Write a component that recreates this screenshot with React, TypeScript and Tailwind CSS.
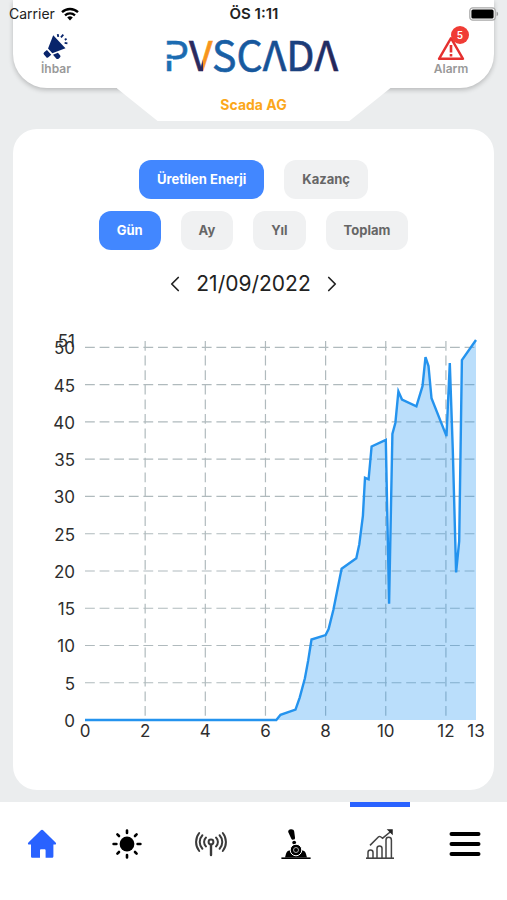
import { useState } from "react";
import type { ReactNode } from "react";
import { ChevronLeft, ChevronRight } from "lucide-react";

type Point = [hour: number, value: number];

const production: Point[] = [
  [0, 0], [6.36, 0], [6.5, 0.7], [7, 1.4], [7.14, 3], [7.31, 5.6], [7.42, 8], [7.53, 10.8],
  [8, 11.4], [8.1, 12.2], [8.26, 14.8], [8.53, 20.3], [9.02, 21.7], [9.12, 23.6], [9.24, 27.4],
  [9.31, 32.5], [9.43, 32.3], [9.53, 36.7], [10, 37.6], [10.11, 15.6], [10.22, 38.4],
  [10.32, 39.9], [10.42, 44.1], [10.54, 43], [11.02, 42.1], [11.22, 44.8], [11.32, 48.7],
  [11.42, 47.5], [11.52, 43.2], [12.02, 38.1], [12.13, 47.9], [12.23, 36.2], [12.34, 19.8],
  [12.44, 24], [12.53, 48.3], [13, 51],
];

const PLOT = { left: 72, right: 463, top: 20, bottom: 400 };
const MAX_HOUR = 13;
const MAX_VALUE = 51;

const px = (hour: number) => PLOT.left + (hour / MAX_HOUR) * (PLOT.right - PLOT.left);
const py = (value: number) => PLOT.bottom - (value / MAX_VALUE) * (PLOT.bottom - PLOT.top);

const yTicks = [0, 5, 10, 15, 20, 25, 30, 35, 40, 45, 50, 51];
const xTicks = [0, 2, 4, 6, 8, 10, 12, 13];

function EnergyChart() {
  const line = production.map(([h, v]) => `${px(h).toFixed(1)},${py(v).toFixed(1)}`).join(" ");

  return (
    <svg viewBox="0 0 481 430" className="block w-full" role="img" aria-label="Üretilen Enerji">
      <g stroke="#b0babd" strokeWidth="1.2" strokeDasharray="9.8 4.8">
        {yTicks.slice(1, -1).map((v) => (
          <line key={v} x1={PLOT.left} x2={PLOT.right} y1={py(v)} y2={py(v)} />
        ))}
        {xTicks.slice(1, -1).map((h) => (
          <line key={h} x1={px(h)} x2={px(h)} y1={PLOT.top + 1} y2={PLOT.bottom} />
        ))}
      </g>
      <polygon
        points={`${PLOT.left},${PLOT.bottom} ${line} ${PLOT.right},${PLOT.bottom}`}
        fill="#2196f3"
        fillOpacity="0.31"
      />
      <polyline points={line} fill="none" stroke="#2493ee" strokeWidth="2.4" />
      <g className="fill-[#2e2e2e] text-[17px]">
        {yTicks.map((v) => (
          <text key={v} x={PLOT.left - 10} y={py(v) + 7} textAnchor="end">
            {v}
          </text>
        ))}
        {xTicks.map((h) => (
          <text key={h} x={px(h)} y={PLOT.bottom + 17} textAnchor="middle">
            {h}
          </text>
        ))}
      </g>
    </svg>
  );
}

function Chip({ label, active, onClick }: { label: string; active: boolean; onClick: () => void }) {
  return (
    <button
      type="button"
      onClick={onClick}
      className={`h-[39px] rounded-xl px-[18px] text-[13px] font-bold ${
        active ? "bg-[#4287ff] text-white" : "bg-[#f0f1f2] text-[#666666]"
      }`}
    >
      {label}
    </button>
  );
}

function StatusBar() {
  return (
    <div className="absolute inset-x-0 top-0 z-20 grid h-7 grid-cols-3 items-center pr-2 pl-[9px] text-sm text-[#222222]">
      <div className="flex items-center gap-1.5">
        <span>Carrier</span>
        <svg width="18" height="14" viewBox="0 0 18 14" fill="none" stroke="#000" strokeWidth="2.3">
          <path d="M1 5.2a11.6 11.6 0 0 1 16 0M4 8.4a7.4 7.4 0 0 1 10 0" />
          <path d="M9 13.4 6.2 10.6a4 4 0 0 1 5.6 0z" fill="#000" stroke="none" />
        </svg>
      </div>
      <span className="text-center text-[15px] font-semibold">ÖS 1:11</span>
      <svg width="30" height="14" viewBox="0 0 30 14" className="justify-self-end">
        <rect x="0.8" y="0.8" width="25.4" height="12.4" rx="3" fill="#fff" stroke="#a8a8a8" strokeWidth="1.2" />
        <rect x="2.4" y="2.4" width="22.2" height="9.2" rx="1.6" fill="#000" />
        <path d="M27.6 4.8c2 .6 2 3.8 0 4.4z" fill="#999" />
      </svg>
    </div>
  );
}

function Logo() {
  return (
    <svg width="180" height="46" viewBox="0 0 180 46" className="overflow-visible" role="img" aria-label="PVSCADA">
      <defs>
        <linearGradient id="word" gradientUnits="userSpaceOnUse" x1="0" x2="176" y1="0" y2="0">
          <stop offset="0" stopColor="#1d6fb5" />
          <stop offset="0.6" stopColor="#155398" />
          <stop offset="1" stopColor="#242254" />
        </linearGradient>
        <linearGradient id="vee" gradientUnits="userSpaceOnUse" x1="0" x2="80" y1="0" y2="0">
          <stop offset="0.49" stopColor="#2a2a5e" />
          <stop offset="0.49" stopColor="#f7941d" />
        </linearGradient>
      </defs>
      <text
        x="-1"
        y="40"
        fill="url(#word)"
        stroke="url(#word)"
        strokeWidth="0.6"
        className="font-['Noto_Sans_CJK_SC',sans-serif] text-[41px]"
      >
        P<tspan fill="url(#vee)" stroke="url(#vee)">V</tspan>SCΛDΛ
      </text>
      {/* breaks in the stem of the P */}
      <path d="M0 13.8h9v9.6H0zM0 27.8h9v2H0z" fill="#fff" />
    </svg>
  );
}

function HornIcon() {
  return (
    <svg width="28" height="28" viewBox="0 0 26 26" fill="#08246b">
      <path d="M10.4 2.2 21.8 14.2 9.6 18.8 5.6 14.4z" />
      <path d="m4.6 15.8 4 4.4-2.4 2.2a1.6 1.6 0 0 1-2.4-.2l-2-2.2a1.6 1.6 0 0 1 .2-2.2z" />
      <path d="m10.2 20.2 4.6-1.8 2 2.2c.6.8.4 1.6-.2 2.2l-1.2 1c-.8.6-1.6.4-2.2-.2z" />
      <path d="m14.6 1 .5 2.6M19.8 1.6 17.6 4M23.6 9.6l-2.6-.4M22.8 5.4l-1.6 1" stroke="#08246b" strokeWidth="1.7" />
    </svg>
  );
}

function WarningIcon() {
  return (
    <svg width="28" height="25" viewBox="0 0 28 25" fill="none" stroke="#e5302f" strokeLinejoin="round">
      <path d="M14 2.2 26 22.8H2z" strokeWidth="2.4" />
      <path d="M14 9v7.4M14 18v2.6" strokeWidth="2.6" />
    </svg>
  );
}

function Header() {
  return (
    <header className="flex flex-col items-center">
      <div className="mx-[13px] flex h-[88px] items-end justify-between self-stretch rounded-b-[34px] bg-white pb-[11px] shadow-[0_2px_5px_rgba(0,0,0,0.22)]">
        <button type="button" className="flex w-[86px] flex-col items-center text-xs leading-4 font-semibold text-[#999999]">
          <HornIcon />
          İhbar
        </button>
        <Logo />
        <button type="button" className="flex w-[86px] flex-col items-center text-xs leading-4 font-semibold text-[#999999]">
          <span className="relative">
            <WarningIcon />
            <span className="absolute -top-2.5 -right-1 flex size-[18px] items-center justify-center rounded-full bg-[#f03c35] text-[10px] text-white">
              5
            </span>
          </span>
          Alarm
        </button>
      </div>
      <div className="relative z-10 flex h-[33px] w-[274px] items-center justify-center bg-white text-sm font-bold text-[#fba71b] [clip-path:polygon(0_0,100%_0,85%_100%,15%_100%)]">
        Scada AG
      </div>
    </header>
  );
}

function HomeIcon() {
  return (
    <svg width="30" height="30" viewBox="0 0 30 30" fill="#2962ff">
      <path d="M13.6 1.4a2 2 0 0 1 2.8 0l12.2 12c1 1 .4 2.2-.8 2.2h-1.4v11.6c0 1-.6 1.6-1.6 1.6h-6.2v-7.4c0-.8-.4-1.2-1.2-1.2h-3.2c-.8 0-1.2.4-1.2 1.2v7.4H5.6c-1 0-1.6-.6-1.6-1.6V15.6H2.2c-1.2 0-1.8-1.2-.8-2.2z" />
    </svg>
  );
}

function SunIcon() {
  return (
    <svg width="30" height="30" viewBox="0 0 30 30" stroke="#000" strokeWidth="2.6" strokeLinecap="round">
      <circle cx="15" cy="15" r="7.4" stroke="none" />
      <path d="M15 1.6V4M15 26v2.4M1.6 15h2.8M25.6 15h2.8M5.4 5.4 7 7M23 23l1.6 1.6M5.4 24.6 7 23M23 7l1.6-1.6" />
    </svg>
  );
}

function AntennaIcon() {
  return (
    <svg width="32" height="30" viewBox="0 0 32 30" fill="none" stroke="#3a3a3a" strokeWidth="2" strokeLinecap="round">
      <circle cx="16" cy="13" r="2.4" />
      <path d="M16 16v10" strokeWidth="2.4" />
      <path d="M11 8.6a6 6 0 0 0 0 8.8M7.4 6.2a10 10 0 0 0 0 13.6M4.2 4a14.5 14.5 0 0 0 0 18" />
      <path d="M21 8.6a6 6 0 0 1 0 8.8M24.6 6.2a10 10 0 0 1 0 13.6M27.8 4a14.5 14.5 0 0 1 0 18" />
    </svg>
  );
}

function LeverIcon() {
  return (
    <svg width="30" height="30" viewBox="0 0 30 30">
      <path d="M7.2 3C7 1.4 8.2.4 9.8.2c1.8-.2 3.2.6 3.4 2.2l.8 6c.2 1.2-.4 2-1.4 2.2-1.2.2-2-.2-2.4-1.2z" />
      <circle cx="13.2" cy="13.6" r="1.9" />
      <path d="M.4 28.4h29.2V30H.4z" />
      <path d="M4 28.4c.6-1.6 1-4.4 2.2-5.8.8-1 2.8-1.4 4-1.6h9.6c1.2.2 3.2.6 4 1.6 1.2 1.4 1.6 4.2 2.2 5.8z" />
      <circle cx="15" cy="21" r="5.8" stroke="#fff" />
      <circle cx="15" cy="21" r="2.5" fill="none" stroke="#bbb" strokeWidth="0.9" />
    </svg>
  );
}

function GrowthIcon() {
  return (
    <svg width="30" height="30" viewBox="0 0 30 30" fill="none" stroke="#444" strokeWidth="1.5">
      <path d="M1 29.2h28" strokeWidth="1.6" />
      <path d="M3 29v-5.4a2.5 2.5 0 0 1 5 0V29M12 29v-9.6a2.5 2.5 0 0 1 5 0V29M21 29V11a2.700 2.700 0 0 1 5.400 0v18" />
      <path d="m5 16.4 8.6-8.6a1.4 1.4 0 0 1 2 0l2 1.400L26.400 2" />
      <path d="M23.500 1H27v3.500z" fill="#222" stroke="#222" />
    </svg>
  );
}

function MenuIcon() {
  return (
    <svg width="32" height="30" viewBox="0 0 32 30" stroke="#000" strokeWidth="4" strokeLinecap="round">
      <path d="M2.5 5h27M2.5 15h27M2.5 25h27" />
    </svg>
  );
}

const tabs: { name: string; icon: ReactNode }[] = [
  { name: "Ana sayfa", icon: <HomeIcon /> },
  { name: "Hava", icon: <SunIcon /> },
  { name: "Sinyal", icon: <AntennaIcon /> },
  { name: "Kontrol", icon: <LeverIcon /> },
  { name: "Grafik", icon: <GrowthIcon /> },
  { name: "Menü", icon: <MenuIcon /> },
];

export default function App() {
  const [metric, setMetric] = useState("Üretilen Enerji");
  const [period, setPeriod] = useState("Gün");
  const [tab, setTab] = useState("Grafik");

  return (
    <div className="relative flex min-h-screen flex-col bg-[#ebedee] font-['Inter',sans-serif]">
      <StatusBar />
      <Header />

      <main className="mx-[13px] mt-2 mb-3 flex-1 rounded-3xl bg-white pt-[31px]">
        <div className="flex justify-center gap-5">
          {["Üretilen Enerji", "Kazanç"].map((m) => (
            <Chip key={m} label={m} active={m === metric} onClick={() => setMetric(m)} />
          ))}
        </div>
        <div className="mt-3 flex justify-center gap-5">
          {["Gün", "Ay", "Yıl", "Toplam"].map((p) => (
            <Chip key={p} label={p} active={p === period} onClick={() => setPeriod(p)} />
          ))}
        </div>

        <div className="mt-5 mb-[22px] flex h-7 items-center justify-center gap-2 text-[#222222]">
          <button type="button" aria-label="Önceki gün">
            <ChevronLeft size={26} strokeWidth={1.6} />
          </button>
          <span className="text-[21px]">21/09/2022</span>
          <button type="button" aria-label="Sonraki gün">
            <ChevronRight size={26} strokeWidth={1.6} />
          </button>
        </div>

        <EnergyChart />
      </main>

      <nav className="grid h-[98px] grid-cols-6 bg-white">
        {tabs.map(({ name, icon }) => (
          <button
            key={name}
            type="button"
            aria-label={name}
            onClick={() => setTab(name)}
            className="flex flex-col items-center gap-[22px]"
          >
            <span className={`h-[5px] w-[60px] ${name === tab ? "bg-[#2962ff]" : ""}`} />
            {icon}
          </button>
        ))}
      </nav>
    </div>
  );
}
